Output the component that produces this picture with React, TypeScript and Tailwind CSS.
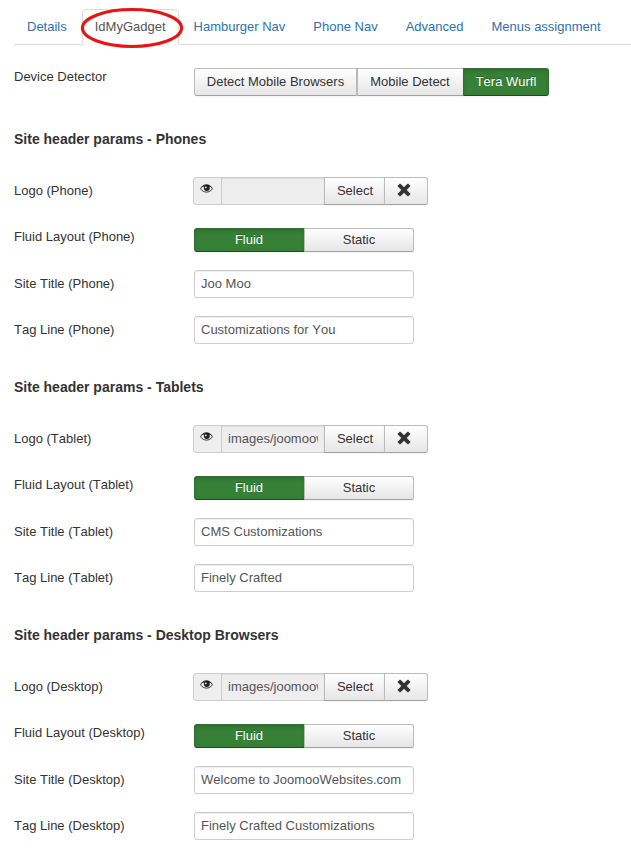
import React from 'react';

const tabs = ['Details', 'IdMyGadget', 'Hamburger Nav', 'Phone Nav', 'Advanced', 'Menus assignment'];

const devices = [
  { singular: 'Phone', plural: 'Phones', logo: '', title: 'Joo Moo', tagLine: 'Customizations for You' },
  { singular: 'Tablet', plural: 'Tablets', logo: 'images/joomoowebsites.png', title: 'CMS Customizations', tagLine: 'Finely Crafted' },
  { singular: 'Desktop', plural: 'Desktop Browsers', logo: 'images/joomoowebsites.png', title: 'Welcome to JoomooWebsites.com', tagLine: 'Finely Crafted Customizations' },
];

const button =
  'flex items-center justify-center border border-[#bbb] border-b-[#a2a2a2] bg-linear-to-b from-white to-[#e6e6e6] text-[#333] shadow-[inset_0_1px_0_rgba(255,255,255,0.2),0_1px_2px_rgba(0,0,0,0.05)]';
const activeButton =
  'flex items-center justify-center border border-[#2f6f2f] border-b-[#1f4a1f] bg-[#378137] text-white shadow-[inset_0_2px_4px_rgba(0,0,0,0.15),0_1px_2px_rgba(0,0,0,0.05)] [text-shadow:0_-1px_0_rgba(0,0,0,0.25)]';

function Row({ label, pad = true, className, children }: { label: string; pad?: boolean; className: string; children: React.ReactNode }) {
  return (
    <div className={`flex ${className}`}>
      <div className={`w-[180px] shrink-0 ${pad ? 'pt-[5px]' : ''}`}>{label}</div>
      {children}
    </div>
  );
}

function TextField({ value }: { value: string }) {
  return (
    <input
      readOnly
      value={value}
      className="h-7 w-[220px] rounded-[3px] border border-[#ccc] bg-white px-1.5 pb-[2px] text-[#555] shadow-[inset_0_1px_1px_rgba(0,0,0,0.075)] outline-none"
    />
  );
}

function EyeIcon() {
  return (
    <svg width="13" height="9" viewBox="0 0 13 9">
      <path d="M.6 4.7C3.2 -.4 9.8 -.4 12.4 4.7C9.8 9.2 3.2 9.2 .6 4.7Z" fill="#f4f4f4" stroke="#333" strokeWidth="1" />
      <path d="M.8 3.8C3.6 -.5 9.4 -.5 12.2 3.8C9.4 1.6 3.6 1.6 .8 3.8Z" fill="#333" />
      <circle cx="6.8" cy="4.1" r="3" fill="#222" />
      <circle cx="5.8" cy="3.4" r=".9" fill="#ddd" />
    </svg>
  );
}

function RemoveIcon() {
  return (
    <svg width="14" height="14" viewBox="0 0 14 14">
      <path d="M3 .5Q5.2 2.4 7 4.2Q8.9 2.2 11 .5L13.5 3Q11.6 4.9 9.7 7Q11.7 8.9 13.6 10.9L11 13.5Q9 11.6 7 9.7Q5.1 11.8 3 13.5L.4 11Q2.5 9 4.3 7Q2.4 4.9 .4 3Z" fill="#333" />
    </svg>
  );
}

function DeviceSection({ device }: { device: (typeof devices)[number] }) {
  return (
    <section className="h-[248px] pt-[34px]">
      <h4 className="text-sm leading-[18px] font-bold [font-kerning:normal]">Site header params - {device.plural}</h4>
      <Row label={`Logo (${device.singular})`} className="mt-[29px] h-7">
        <div className="-ml-px flex">
          <span className="flex h-7 w-[29px] justify-center rounded-l-[3px] border border-[#ccc] bg-[#eee] pt-[6px] pr-[3px]">
            <EyeIcon />
          </span>
          <input
            readOnly
            value={device.logo}
            className="-ml-px h-7 w-[104px] border border-[#ccc] bg-[#eee] px-1.5 pb-[2px] text-[#555] shadow-[inset_0_1px_1px_rgba(0,0,0,0.075)] outline-none"
          />
          <button className={`${button} -ml-px h-7 w-[61px] pl-px`}>Select</button>
          <button className={`${button} -ml-px h-7 w-11 rounded-r-[3px] pr-1 pb-[2px]`}><RemoveIcon /></button>
        </div>
      </Row>
      <Row label={`Fluid Layout (${device.singular})`} pad={false} className="mt-[23px] h-6">
        <button className={`${activeButton} h-6 w-[111px] rounded-l-[3px] pr-px`}>Fluid</button>
        <button className={`${button} -ml-px h-6 w-[110px] rounded-r-[3px]`}>Static</button>
      </Row>
      <Row label={`Site Title (${device.singular})`} className="mt-[18px] h-7"><TextField value={device.title} /></Row>
      <Row label={`Tag Line (${device.singular})`} className="mt-[18px] h-7"><TextField value={device.tagLine} /></Row>
    </section>
  );
}

export default function App() {
  return (
    <div className="h-[854px] overflow-hidden bg-white pl-3.5 font-['Liberation_Sans',Arial,sans-serif] text-[13px] leading-[18px] text-[#333] [font-kerning:none]">
      <nav className="relative flex h-[45px] items-end border-b border-[#ddd]">
        {tabs.map((tab) => (
          <a
            key={tab}
            className={`-mb-px mr-0.5 h-9 rounded-t border px-3 pt-2 whitespace-nowrap ${
              tab === 'IdMyGadget' ? 'border-[#ddd] border-b-white bg-white text-[#555]' : 'border-transparent text-[#3071a9]'
            }`}
          >
            {tab}
          </a>
        ))}
        <svg className="absolute top-[7px] left-[66px]" width="104" height="42" viewBox="0 0 104 42">
          <ellipse cx="52" cy="21" rx="49.6" ry="18.4" fill="none" stroke="#e81313" strokeWidth="3" />
        </svg>
      </nav>
      <Row label="Device Detector" pad={false} className="mt-[23px] h-7">
        <button className={`${button} h-7 w-[163px] rounded-l-[3px]`}>Detect Mobile Browsers</button>
        <button className={`${button} h-7 w-[107px] pr-px`}>Mobile Detect</button>
        <button className={`${activeButton} -ml-px h-7 w-[86px] rounded-r-[3px]`}>Tera Wurfl</button>
      </Row>
      {devices.map((device) => <DeviceSection key={device.singular} device={device} />)}
    </div>
  );
}
